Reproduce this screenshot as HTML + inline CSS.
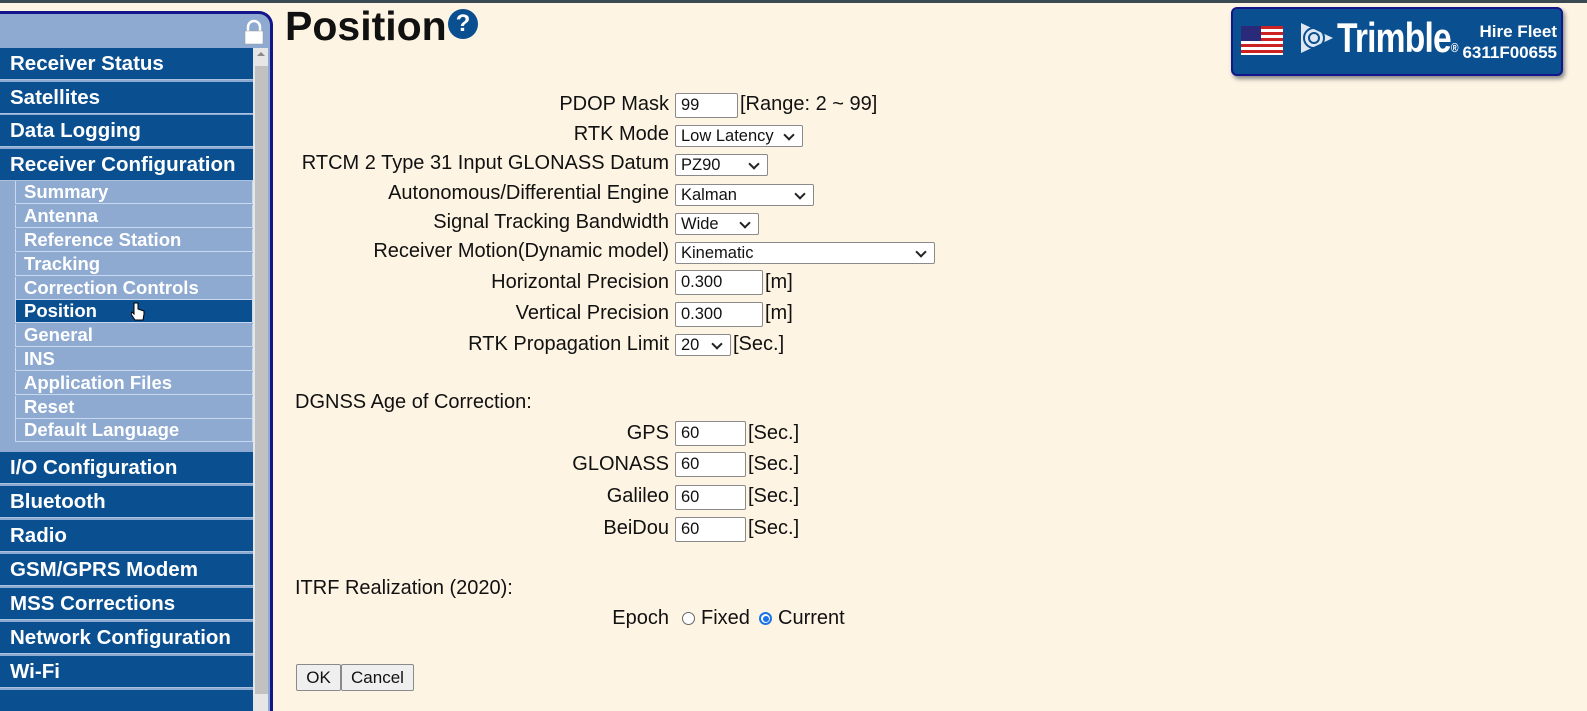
<!DOCTYPE html>
<html><head><meta charset="utf-8"><style>
*{margin:0;padding:0;box-sizing:border-box}
body{width:1587px;height:698px;overflow:hidden;background:#fdf4e4;font-family:"Liberation Sans",Arial,sans-serif;position:relative}
.top{position:absolute;left:0;top:0;width:1587px;height:3px;background:#3b4a52}
.side{position:absolute;left:0;top:11px;width:273px;height:700px;border:3px solid #13168a;border-left:none;border-bottom:none;border-top-right-radius:14px;background:#8eaad1;overflow:hidden}
.m{position:absolute;left:0;width:253px;height:32px;background:#0a4f90;color:#fff;font-weight:bold;font-size:20.5px;line-height:32px;padding-left:10px;border-bottom:1px solid #a9c2e2;white-space:nowrap}
.s{position:absolute;left:15px;width:238px;height:23px;border:1px solid #c8d8ee;border-top:none;color:#fff;font-weight:bold;font-size:18.5px;line-height:22px;padding-left:8px;white-space:nowrap}
.s.a{background:#0a4f90}
.sb{position:absolute;left:253px;top:34px;width:15px;height:670px;background:#e6e6e6}
.th{position:absolute;left:255px;top:52px;width:13px;height:628px;background:#c1c1c1}
.l{position:absolute;left:0;width:669px;text-align:right;font-size:20px;color:#111;white-space:nowrap}
.c{position:absolute;left:675px;height:25px;border:1px solid #8a8a8a;border-radius:2px;background:#fff;font-size:16.5px;line-height:23px;padding-left:5px;color:#111;white-space:nowrap}
.sel:after{content:"";position:absolute;right:9px;top:5px;width:6px;height:6px;border-right:2px solid #222;border-bottom:2px solid #222;transform:rotate(45deg)}
.u{position:absolute;font-size:20px;color:#111;white-space:nowrap}
.h{position:absolute;left:295px;font-size:20px;color:#111}
.btn{position:absolute;top:664px;height:27px;border:1px solid #8a8a8a;background:#efefef;font-size:17px;line-height:25px;text-align:center;color:#111;border-radius:2px}
</style></head><body>
<div class="top"></div>
<div class="side">
<svg style="position:absolute;left:243px;top:5px" width="22" height="26" viewBox="0 0 22 26"><path d="M5 12V8a6 6 0 0 1 12 0v4" fill="none" stroke="#fff" stroke-width="2.5"/><rect x="2" y="12" width="18" height="13" fill="#fff" stroke="#999" stroke-width="0.5"/></svg>
<div class="m" style="top:34px">Receiver Status</div>
<div class="m" style="top:68px">Satellites</div>
<div class="m" style="top:101px">Data Logging</div>
<div class="m" style="top:135px">Receiver Configuration</div>
<div class="s" style="top:167px">Summary</div>
<div class="s" style="top:191px">Antenna</div>
<div class="s" style="top:215px">Reference Station</div>
<div class="s" style="top:239px">Tracking</div>
<div class="s" style="top:263px">Correction Controls</div>
<div class="s a" style="top:286px">Position</div>
<div class="s" style="top:310px">General</div>
<div class="s" style="top:334px">INS</div>
<div class="s" style="top:358px">Application Files</div>
<div class="s" style="top:382px">Reset</div>
<div class="s" style="top:405px">Default Language</div>
<div class="m" style="top:438px">I/O Configuration</div>
<div class="m" style="top:472px">Bluetooth</div>
<div class="m" style="top:506px">Radio</div>
<div class="m" style="top:540px">GSM/GPRS Modem</div>
<div class="m" style="top:574px">MSS Corrections</div>
<div class="m" style="top:608px">Network Configuration</div>
<div class="m" style="top:642px">Wi-Fi</div>
<div class="m" style="top:676px"></div>
<div class="sb"></div><div class="th"></div>
<div style="position:absolute;left:257px;top:38px;width:0;height:0;border-left:4px solid transparent;border-right:4px solid transparent;border-bottom:4px solid #888"></div>
</div>
<svg style="position:absolute;left:131px;top:302px" width="14" height="20" viewBox="0 0 14 20"><path d="M3 1v11l-2-2-1 2 4 6h8l1-6v-3l-3-1-3-1V1z" fill="#fff" stroke="#000" stroke-width="1"/></svg>

<div style="position:absolute;left:285px;top:3px;font-size:41px;font-weight:bold;color:#111">Position</div>
<div style="position:absolute;left:448px;top:9px;width:30px;height:30px;border-radius:50%;background:#0a4f90;color:#fff;font-weight:bold;font-size:24px;line-height:30px;text-align:center">?</div>

<div style="position:absolute;left:1231px;top:7px;width:332px;height:69px;background:#0a4f90;border:2px solid #13168a;border-radius:6px;box-shadow:2px 3px 4px #888"></div>
<svg style="position:absolute;left:1241px;top:26px" width="42" height="29" viewBox="0 0 42 29"><rect width="42" height="29" fill="#fff"/><g fill="#c22"><rect y="0" width="42" height="3"/><rect y="6" width="42" height="3"/><rect y="12" width="42" height="3"/><rect y="18" width="42" height="3"/><rect y="24" width="42" height="3"/></g><rect width="20" height="15" fill="#2a2a7a"/></svg>
<svg style="position:absolute;left:1297px;top:19px" width="40" height="38" viewBox="0 0 40 38"><path d="M4 4L36 19L4 34Z" fill="#dfe8f2"/><circle cx="17" cy="19" r="10" fill="none" stroke="#0a4f90" stroke-width="2"/><circle cx="17" cy="19" r="5" fill="none" stroke="#0a4f90" stroke-width="2"/></svg>
<div style="position:absolute;left:1337px;top:14px;font-size:42px;font-weight:bold;color:#fff;transform:scaleX(0.8);transform-origin:left top;white-space:nowrap;letter-spacing:-1px">Trimble<span style="font-size:13px">®</span></div>
<div style="position:absolute;left:1457px;top:21px;width:100px;text-align:right;color:#fff;font-weight:bold;font-size:17px;line-height:21px;white-space:nowrap">Hire Fleet<br>6311F00655</div>

<div class="l" style="top:93px">PDOP Mask</div><div class="c" style="top:93px;width:63px">99</div><div class="u" style="left:740px;top:93px">[Range: 2 ~ 99]</div>
<div class="l" style="top:123px">RTK Mode</div><div class="c sel" style="top:125px;width:128px;height:22px;line-height:20px">Low Latency</div>
<div class="l" style="top:152px">RTCM 2 Type 31 Input GLONASS Datum</div><div class="c sel" style="top:154px;width:93px;height:22px;line-height:20px">PZ90</div>
<div class="l" style="top:182px">Autonomous/Differential Engine</div><div class="c sel" style="top:184px;width:139px;height:22px;line-height:20px">Kalman</div>
<div class="l" style="top:211px">Signal Tracking Bandwidth</div><div class="c sel" style="top:213px;width:84px;height:22px;line-height:20px">Wide</div>
<div class="l" style="top:240px">Receiver Motion(Dynamic model)</div><div class="c sel" style="top:242px;width:260px;height:22px;line-height:20px">Kinematic</div>
<div class="l" style="top:271px">Horizontal Precision</div><div class="c" style="top:270px;width:88px">0.300</div><div class="u" style="left:765px;top:271px">[m]</div>
<div class="l" style="top:302px">Vertical Precision</div><div class="c" style="top:302px;width:88px">0.300</div><div class="u" style="left:765px;top:302px">[m]</div>
<div class="l" style="top:333px">RTK Propagation Limit</div><div class="c sel" style="top:334px;width:56px;height:22px;line-height:20px">20</div><div class="u" style="left:733px;top:333px">[Sec.]</div>

<div class="h" style="top:391px">DGNSS Age of Correction:</div>
<div class="l" style="top:422px">GPS</div><div class="c" style="top:421px;width:71px">60</div><div class="u" style="left:748px;top:422px">[Sec.]</div>
<div class="l" style="top:453px">GLONASS</div><div class="c" style="top:452px;width:71px">60</div><div class="u" style="left:748px;top:453px">[Sec.]</div>
<div class="l" style="top:485px">Galileo</div><div class="c" style="top:485px;width:71px">60</div><div class="u" style="left:748px;top:485px">[Sec.]</div>
<div class="l" style="top:517px">BeiDou</div><div class="c" style="top:517px;width:71px">60</div><div class="u" style="left:748px;top:517px">[Sec.]</div>

<div class="h" style="top:577px">ITRF Realization (2020):</div>
<div class="l" style="top:607px">Epoch</div>
<div style="position:absolute;left:682px;top:612px;width:13px;height:13px;border:1px solid #666;border-radius:50%;background:#fff"></div>
<div class="u" style="left:701px;top:607px">Fixed</div>
<div style="position:absolute;left:759px;top:612px;width:13px;height:13px;border:2px solid #1a73e8;border-radius:50%;background:#fff"><div style="position:absolute;left:1.5px;top:1.5px;width:6px;height:6px;border-radius:50%;background:#1a73e8"></div></div>
<div class="u" style="left:778px;top:607px">Current</div>

<div class="btn" style="left:296px;width:45px">OK</div>
<div class="btn" style="left:341px;width:73px">Cancel</div>
</body></html>
